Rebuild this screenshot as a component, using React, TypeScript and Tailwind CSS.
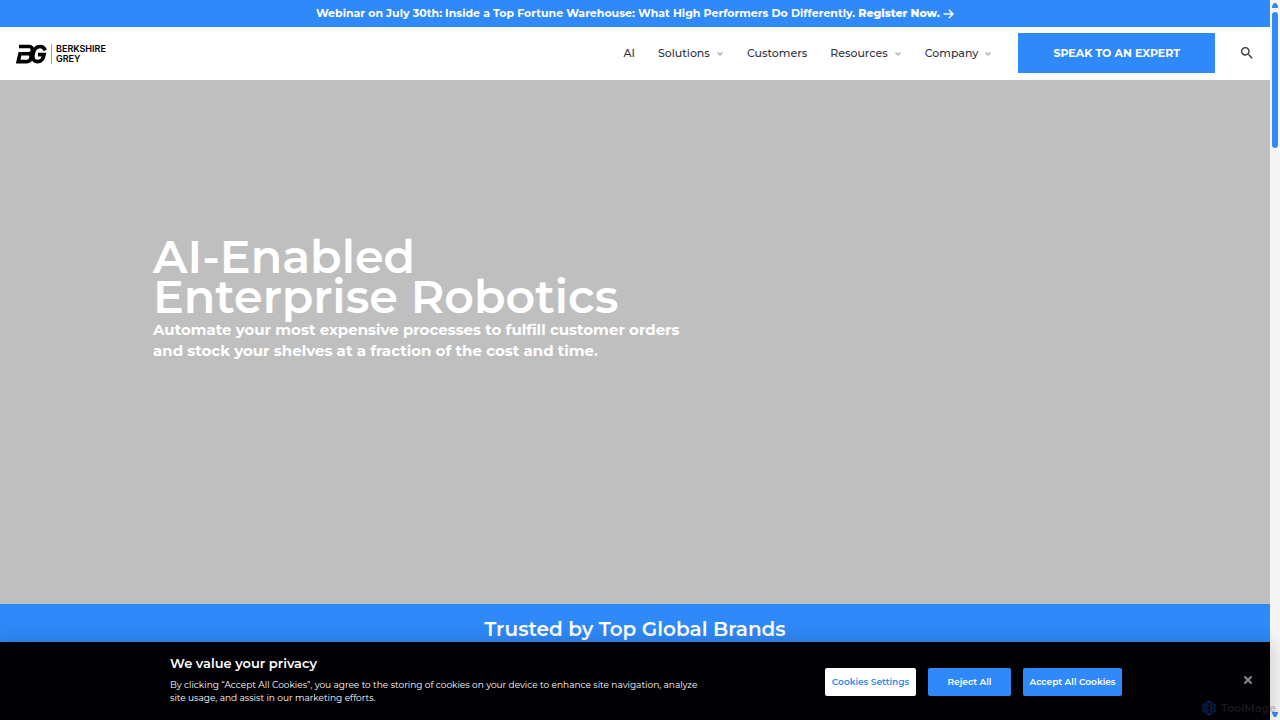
import React from 'react'
import { X } from 'lucide-react'
import { FaArrowRight } from 'react-icons/fa6'
import { MdSearch } from 'react-icons/md'

interface NavItem {
  label: string
  hasMenu: boolean
}

const navItems: NavItem[] = [
  { label: 'AI', hasMenu: false },
  { label: 'Solutions', hasMenu: true },
  { label: 'Customers', hasMenu: false },
  { label: 'Resources', hasMenu: true },
  { label: 'Company', hasMenu: true },
]

const Logo: React.FC = () => (
  <a href="#" className="flex items-center pt-0.5 text-black">
    <svg viewBox="0 0 32 20" className="h-5 w-8" fill="none" stroke="currentColor" aria-hidden="true">
      <path d="M3 2.5H13.5C17.6 2.5 17.4 9.8 13 9.8H5.5" strokeWidth="3.6" />
      <path d="M13 9.8C16.6 10.2 15.4 17.6 10.8 17.6H2.2L4.4 8.1" strokeWidth="3.6" />
      <path d="M29.2 6.4C28.2 3.6 26.4 2.5 24.2 2.5C20 2.5 17.8 6 17 10.4C16.2 14.8 17.8 17.6 21.4 17.6C25.4 17.6 27.2 15 28.1 10.6H22" strokeWidth="3.6" />
    </svg>
    <span className="ml-[3px] h-5 w-px bg-gray-400" />
    <span className="ml-1 flex flex-col font-['Inter',sans-serif] text-[9px] leading-[10px] font-semibold">
      <span>BERKSHIRE</span>
      <span>GREY</span>
    </span>
  </a>
)

const Caret: React.FC = () => (
  <svg viewBox="0 0 8 8" className="h-2 w-2" fill="none" stroke="#b4b4b8" strokeWidth="1.5" aria-hidden="true">
    <path d="M1.5 2.5L4 4.9L6.5 2.5" />
  </svg>
)

const Header: React.FC = () => (
  <header className="flex h-[53px] items-center justify-between bg-white pr-[15px] pb-0.5 pl-4">
    <Logo />
    <div className="flex items-center">
      <nav className="flex items-center gap-[23px] pt-0.5 text-[11px] font-medium text-[#33333f]">
        {navItems.map(item => (
          <a key={item.label} href="#" className="flex items-center gap-1.5">
            {item.label}
            {item.hasMenu && <Caret />}
          </a>
        ))}
      </nav>
      <a
        href="#"
        className="ml-[26px] bg-[#2f89f8] px-[35px] py-3 text-[11px] leading-4 font-bold text-white"
      >
        SPEAK TO AN EXPERT
      </a>
      <button aria-label="Search" className="ml-6 text-[#33333f]">
        <MdSearch className="h-4 w-4" />
      </button>
    </div>
  </header>
)

const CookieBanner: React.FC = () => (
  <section
    aria-label="Privacy"
    className="absolute inset-x-0 bottom-0 flex items-start bg-[#000005] pt-[11px] pr-4 pb-4 pl-[170px] text-white shadow-[0_0_18px_rgba(0,0,0,0.2)]"
  >
    <div className="w-[536px]">
      <h2 className="text-[13px] leading-5 font-semibold">We value your privacy</h2>
      <p className="mt-[5px] text-[9px] leading-[13px]">
        By clicking “Accept All Cookies”, you agree to the storing of cookies on your device to enhance site navigation, analyze site usage, and assist in our marketing efforts.
      </p>
    </div>
    <div className="mt-[15px] ml-auto flex gap-3 text-[9px] leading-[14px] font-semibold">
      <button className="h-7 w-[91px] rounded-xs bg-white text-[#2f89f8]">Cookies Settings</button>
      <button className="h-7 w-[83px] rounded-xs bg-[#2f89f8]">Reject All</button>
      <button className="h-7 w-[99px] rounded-xs bg-[#2f89f8]">Accept All Cookies</button>
    </div>
    <button aria-label="Close" className="mt-[21px] ml-[120px] text-[#8a8a8a]">
      <X className="h-3 w-3" strokeWidth={4} />
    </button>
  </section>
)

const Watermark: React.FC = () => (
  <div className="absolute right-1 bottom-1 flex items-center gap-1 opacity-30">
    <svg viewBox="0 0 16 16" className="h-4 w-4" fill="none" stroke="#1f6fe0" strokeWidth="1.1" aria-hidden="true">
      <path d="M8 1L14 4.5V11.5L8 15L2 11.5V4.5Z" />
      <path d="M8 1L10 5L14 4.5M14 4.5L11.5 8L14 11.5M14 11.5L10 11L8 15M8 15L6 11L2 11.5M2 11.5L4.5 8L2 4.5M2 4.5L6 5L8 1" />
      <circle cx="8" cy="8" r="2.5" />
    </svg>
    <span className="text-[11px] leading-4 font-semibold text-[#5a4a4a]">ToolMage</span>
  </div>
)

const ScrollTrack: React.FC = () => (
  <div className="flex w-[10px] flex-col items-center bg-[#f5f5f5] py-[3px] text-[#2f89f8]" aria-hidden="true">
    <svg viewBox="0 0 6 5" className="h-[5px] w-[6px]" fill="currentColor">
      <path d="M2 0H4L6 3V5H0V3Z" />
    </svg>
    <div className="mt-1 h-[136px] w-[6px] rounded-full bg-[#2f89f8]" />
    <svg viewBox="0 0 6 5" className="mt-auto h-[5px] w-[6px]" fill="currentColor">
      <path d="M0 0H6V1L4 5H2L0 1Z" />
    </svg>
  </div>
)

export default function App() {
  return (
    <div className="relative flex h-screen overflow-hidden font-['Montserrat','Inter',sans-serif]">
      <div className="relative flex min-w-0 flex-1 flex-col">
        <div className="bg-[#2f89f8] pt-[3px] pb-1 text-center text-[11px] leading-5 font-bold text-white">
          Webinar on July 30th: Inside a Top Fortune Warehouse: What High Performers Do Differently.{' '}
          <a href="#" className="font-extrabold">
            Register Now.{' '}
            <FaArrowRight className="-mt-px inline h-3 w-[11px]" />
          </a>
        </div>
        <Header />
        <main className="flex flex-1 flex-col">
          <section className="flex flex-1 flex-col justify-center bg-[#bfbfbf] px-[153px] pb-[86px] text-white">
            <h1 className="text-[46px] leading-10 font-semibold">
              AI-Enabled
              <br />
              Enterprise Robotics
            </h1>
            <p className="mt-0.5 text-[15px] leading-[21px] font-bold">
              Automate your most expensive processes to fulfill customer orders
              <br />
              and stock your shelves at a fraction of the cost and time.
            </p>
          </section>
          <section className="bg-[#2f89f8] pt-[9px] pb-[75px] text-center text-white">
            <h2 className="text-[20px] leading-8 font-semibold">Trusted by Top Global Brands</h2>
          </section>
        </main>
        <CookieBanner />
      </div>
      <ScrollTrack />
      <Watermark />
    </div>
  )
}
